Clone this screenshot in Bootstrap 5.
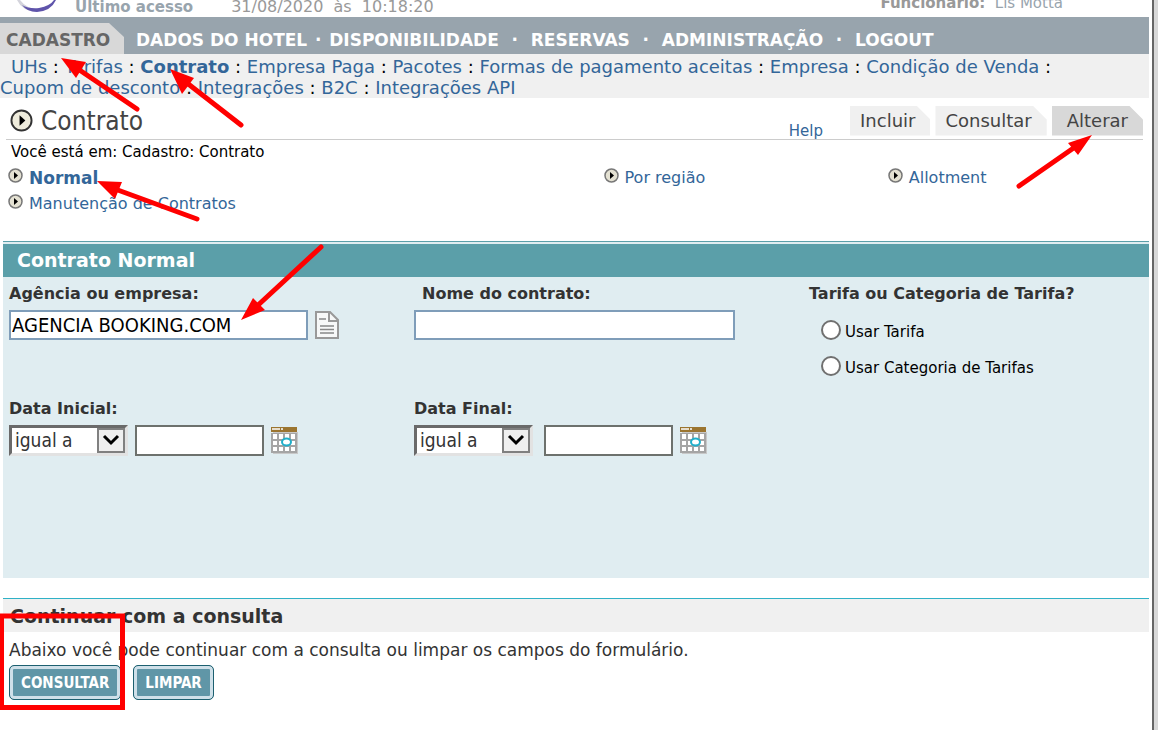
<!DOCTYPE html>
<html lang="pt-BR">
<head>
<meta charset="utf-8">
<meta name="viewport" content="width=device-width, initial-scale=1">
<title>Contrato</title>
<link href="https://cdn.jsdelivr.net/npm/bootstrap@5.3.0/dist/css/bootstrap.min.css" rel="stylesheet">
<style>
body{font-family:"DejaVu Sans",Verdana,sans-serif;font-size:16px;line-height:20px;color:#333;background:#fff}
a{color:#336699;text-decoration:none}
.shell{min-height:100vh}
.page{margin-right:3px}
.edge{width:6px;border-left:2px solid #666;background:#d8d8d8}
.topline{height:17px;color:#999;font-size:15px;line-height:20px}
.topline strong.acesso,.topline .nome{color:#98a4ad}
.topline .date{font-size:16px;margin-left:38px}
.logo{width:75px}
.func{padding-right:86px;margin-bottom:4px}
.mainnav{height:37px;background:#98a4ad;font-weight:700;font-size:17px;color:#fff;line-height:21px}
.mainnav a{color:#fff}
.mainnav .current{background:#d8d8d8;color:#666;width:124px;height:31px;padding:7px 0 0 6px;clip-path:polygon(0 0,109px 0,100% 14px,100% 100%,0 100%)}
.mainnav .items{margin-left:12px;padding-bottom:3px}
.mainnav .dot{width:32px;text-align:center}
.mainnav .dot.tight{width:22px}
.submenu{background:#f0f0f0;font-size:18px;line-height:21px;padding:2px 90px 0 0;height:44px;color:#000}
.submenu .ind{margin-left:11px}
.heading{height:42px;border-bottom:1px solid #ccc;margin:0 6px;padding-top:4px}
.heading h1{font:400 26px/32px "DejaVu Sans Condensed","DejaVu Sans",sans-serif;color:#444}
.help{font-size:15px;line-height:16px;margin-right:27px}
.tabs{gap:5px}
.tabs a{display:block;background:#f0f0f0;color:#444;font-size:18px;line-height:30px;padding:0 15px 0 10px;clip-path:polygon(0 0,calc(100% - 14px) 0,100% 14px,100% 100%,0 100%)}
.tabs a.on{background:#d8d8d8;padding:0 15px}
.crumb{font-size:15px;line-height:25px;color:#000;padding-left:11px}
.links{display:grid;grid-template-columns:595fr 284fr 261fr;padding:0 0 0 8px;line-height:26px}
.links a{display:flex;align-items:center;gap:6px}
.links svg{margin-bottom:5px}
.links .sel{font-weight:700;font-size:17px}
.panel{border-top:1px solid #5b9fa9;background:#e0edf1;margin:24px 0 0 3px;padding-top:2px}
.panel h2{background:#5b9fa9;color:#fff;font-size:19px;line-height:33px;font-weight:700;padding-left:14px}
.fields{display:grid;grid-template-columns:405fr 395fr 340fr;padding-left:6px;height:301px;grid-template-rows:115px auto}
.fields label.cap,.fields legend{font-size:16px;line-height:20px;font-weight:700;color:#333;display:block;margin:0;padding-top:7px}
.fields legend{float:none}
.line{display:flex;align-items:center;gap:7px;margin-top:6px}
.box{border:2px solid #7f9db9;background:#fff;height:30px;border-radius:0;padding:0 1px;font:20px/24px "DejaVu Sans Condensed","DejaVu Sans",sans-serif;color:#000}
.w-agency{width:299px}.w-name{width:321px}
.w-date{width:129px;height:31px;border-color:#6d716d}
.pick{border:3px solid #6a6a6a;border-right-color:#e2e2e2;border-bottom-color:#e2e2e2;width:119px;height:31px;padding:0 0 0 3px;font:19px/25px "DejaVu Sans Condensed","DejaVu Sans",sans-serif;color:#333;border-radius:0;appearance:none;background:#fff url("data:image/svg+xml,%3Csvg xmlns='http://www.w3.org/2000/svg' width='28' height='25'%3E%3Cpath fill='%23efefef' stroke='%23808080' stroke-width='2' d='M1 1h26v23H1z'/%3E%3Cpath d='M7 8l7 7 7-7' fill='none' stroke='%23000' stroke-width='3'/%3E%3C/svg%3E") right center no-repeat}
.choices{padding:10px 0 0 12px}
.opt{font-size:15px;color:#000;gap:4px;height:36px}
.opt input{appearance:none;width:20px;height:20px;border:2px solid #707070;border-radius:50%;background:#fff;margin:0 0 4px}
.icon-btn{border:0;background:none;padding:0;line-height:0}
.next{border-top:1px solid #2fb1c6;margin:20px 0 0 3px}
.next h2{background:#f0f0f0;font-size:19px;line-height:33px;font-weight:700;padding-left:7px;padding-top:1px;height:33px}
.next p{font-size:17px;padding:8px 0 5px 6px}
.actions{gap:12px;padding-left:6px}
.act{font:700 15px/24px "DejaVu Sans Condensed","DejaVu Sans",sans-serif;color:#fff;background:#6096a7;border:1px solid #1d6070;border-radius:5px;box-shadow:inset 0 0 0 3px #cfe0e9;padding:5px 11px 4px;height:35px}
.marks{left:0;top:0;pointer-events:none}
</style>
</head>
<body>
<svg class="d-none"><defs>
<symbol id="bullet" viewBox="0 0 24 24"><circle cx="12" cy="12" r="10.500" fill="#efecdc" stroke="#333" stroke-width="2"/><path d="M10 6.500v11l6-5.500z" fill="#000"/></symbol>
<symbol id="bullet-sm" viewBox="0 0 15 15"><circle cx="7.500" cy="7.500" r="6.500" fill="#e4e1d2" stroke="#777" stroke-width="1.500"/><path d="M6 4v7l4-3.500z" fill="#000"/></symbol>
<symbol id="cal" viewBox="0 0 27 27"><path d="M2 5h25v22H2z" fill="#c8c8c8"/><path d="M0 0h26v5H0z" fill="#9b7530"/><path d="M1 2h8M10 2h2" stroke="#fff" stroke-width="1.500"/><path d="M0 6h26v20H0z" fill="#a5a5a5"/><path d="M2 7h4v5H2zm6 0h4v5H8zm6 0h4v5h-4zm6 0h4v5h-4zM2 14h4v4H2zm6 0h4v4H8zm6 0h4v4h-4zm6 0h4v4h-4zM2 20h4v4H2zm6 0h4v4H8zm6 0h4v4h-4zm6 0h4v4h-4z" fill="#fff"/><ellipse cx="15.500" cy="15" rx="4.500" ry="3.500" fill="#fff" stroke="#20afca" stroke-width="2"/></symbol>
</defs></svg>
<div class="shell d-flex position-relative">
<main class="page flex-grow-1">
  <header class="topline d-flex align-items-end overflow-hidden">
    <svg class="logo flex-shrink-0 align-self-start" height="13" viewBox="0 0 75 13"><path d="M17 0Q22 11 37 12L38 10Q26 8 20 0Z" fill="#d4d4dc"/><path d="M22 5Q29 9 39 8Q50 6 54 0H56Q51 11 37 12Q27 12 22 5Z" fill="#5f54ab"/></svg>
    <strong class="acesso">Último acesso</strong>
    <span class="date">31/08/2020&nbsp; às&nbsp; 10:18:20</span>
    <span class="func ms-auto"><strong>Funcionário:</strong>&nbsp; <span class="nome">Lis Motta</span></span>
  </header>
  <nav class="mainnav d-flex align-items-end">
    <a href="#" class="current">CADASTRO</a>
    <div class="items d-flex"><a href="#">DADOS DO HOTEL</a><span class="dot tight">·</span><a href="#">DISPONIBILIDADE</a><span class="dot">·</span><a href="#">RESERVAS</a><span class="dot">·</span><a href="#">ADMINISTRAÇÃO</a><span class="dot">·</span><a href="#">LOGOUT</a></div>
  </nav>
  <nav class="submenu"><a href="#" class="ind">UHs</a> : <a href="#">Tarifas</a> : <a href="#"><b>Contrato</b></a> : <a href="#">Empresa Paga</a> : <a href="#">Pacotes</a> : <a href="#">Formas de pagamento aceitas</a> : <a href="#">Empresa</a> : <a href="#">Condição de Venda</a> :<br><a href="#">Cupom de desconto</a> : <a href="#">Integrações</a> : <a href="#">B2C</a> : <a href="#">Integrações API</a></nav>
  <div class="heading d-flex align-items-center">
    <svg width="23" height="23" class="ms-1"><use href="#bullet"/></svg>
    <h1 class="m-0 ms-2">Contrato</h1>
    <a href="#" class="help ms-auto align-self-end">Help</a>
    <div class="tabs d-flex"><a href="#">Incluir</a><a href="#">Consultar</a><a href="#" class="on">Alterar</a></div>
  </div>
  <div class="crumb">Você está em: Cadastro: Contrato</div>
  <nav class="links">
    <a href="#" class="sel"><svg width="15" height="15"><use href="#bullet-sm"/></svg>Normal</a>
    <a href="#"><svg width="15" height="15"><use href="#bullet-sm"/></svg>Por região</a>
    <a href="#"><svg width="15" height="15"><use href="#bullet-sm"/></svg>Allotment</a>
    <a href="#"><svg width="15" height="15"><use href="#bullet-sm"/></svg>Manutenção de Contratos</a>
  </nav>
  <form onsubmit="return false">
  <section class="panel">
    <h2 class="m-0">Contrato Normal</h2>
    <div class="fields">
      <div><label class="cap" for="ag">Agência ou empresa:</label>
        <div class="line"><input id="ag" class="box w-agency" type="text" value="AGENCIA BOOKING.COM"><button type="button" class="icon-btn" aria-label="Selecionar"><svg width="24" height="28" viewBox="0 0 24 28"><path d="M1 1h14l8 8v18H1z" fill="#f7f8f8" stroke="#999" stroke-width="2"/><path d="M14 1v9h9" fill="none" stroke="#999" stroke-width="2"/><path d="M4 8h7M5 15h14M5 18.500h14M5 22h14" stroke="#888" stroke-width="1.500"/></svg></button></div></div>
      <div><label class="cap ps-2" for="nm">Nome do contrato:</label><div class="line"><input id="nm" class="box w-name" type="text"></div></div>
      <fieldset><legend>Tarifa ou Categoria de Tarifa?</legend>
        <div class="choices"><label class="opt d-flex align-items-center"><input type="radio" name="t">Usar Tarifa</label><label class="opt d-flex align-items-center"><input type="radio" name="t">Usar Categoria de Tarifas</label></div></fieldset>
      <div><label class="cap" for="di">Data Inicial:</label>
        <div class="line"><select class="pick" aria-label="Operador da data inicial"><option>igual a</option></select><input id="di" class="box w-date" type="text"><button type="button" class="icon-btn" aria-label="Calendário"><svg width="27" height="27"><use href="#cal"/></svg></button></div></div>
      <div><label class="cap" for="df">Data Final:</label>
        <div class="line"><select class="pick me-1" aria-label="Operador da data final"><option>igual a</option></select><input id="df" class="box w-date" type="text"><button type="button" class="icon-btn" aria-label="Calendário"><svg width="27" height="27"><use href="#cal"/></svg></button></div></div>
    </div>
  </section>
  <section class="next">
    <h2 class="m-0">Continuar com a consulta</h2>
    <p class="m-0">Abaixo você pode continuar com a consulta ou limpar os campos do formulário.</p>
    <div class="actions d-flex"><button type="submit" class="act">CONSULTAR</button><button type="reset" class="act">LIMPAR</button></div>
  </section>
  </form>
</main>
<div class="edge flex-shrink-0"></div>
<svg class="marks position-absolute" width="1158" height="730" viewBox="0 0 1158 730">
  <g stroke="#f00" stroke-width="5" stroke-linecap="round"><path d="M137 109L78 69M241 125L187 83M197 219L115 189M321 247L256 307M1019 186L1075 147"/></g>
  <g fill="#f00"><path d="M61 58L86 62L76 78ZM170 69L194 78L182 94ZM97 181L122 182L115 199ZM241 320L253 298L265 310ZM1092 135L1068 143L1078 155Z"/></g>
  <rect x="1.500" y="616" width="121" height="91.500" fill="none" stroke="#f00" stroke-width="5"/>
</svg>
</div>
<script src="https://cdn.jsdelivr.net/npm/bootstrap@5.3.0/dist/js/bootstrap.bundle.min.js"></script>
</body>
</html>
